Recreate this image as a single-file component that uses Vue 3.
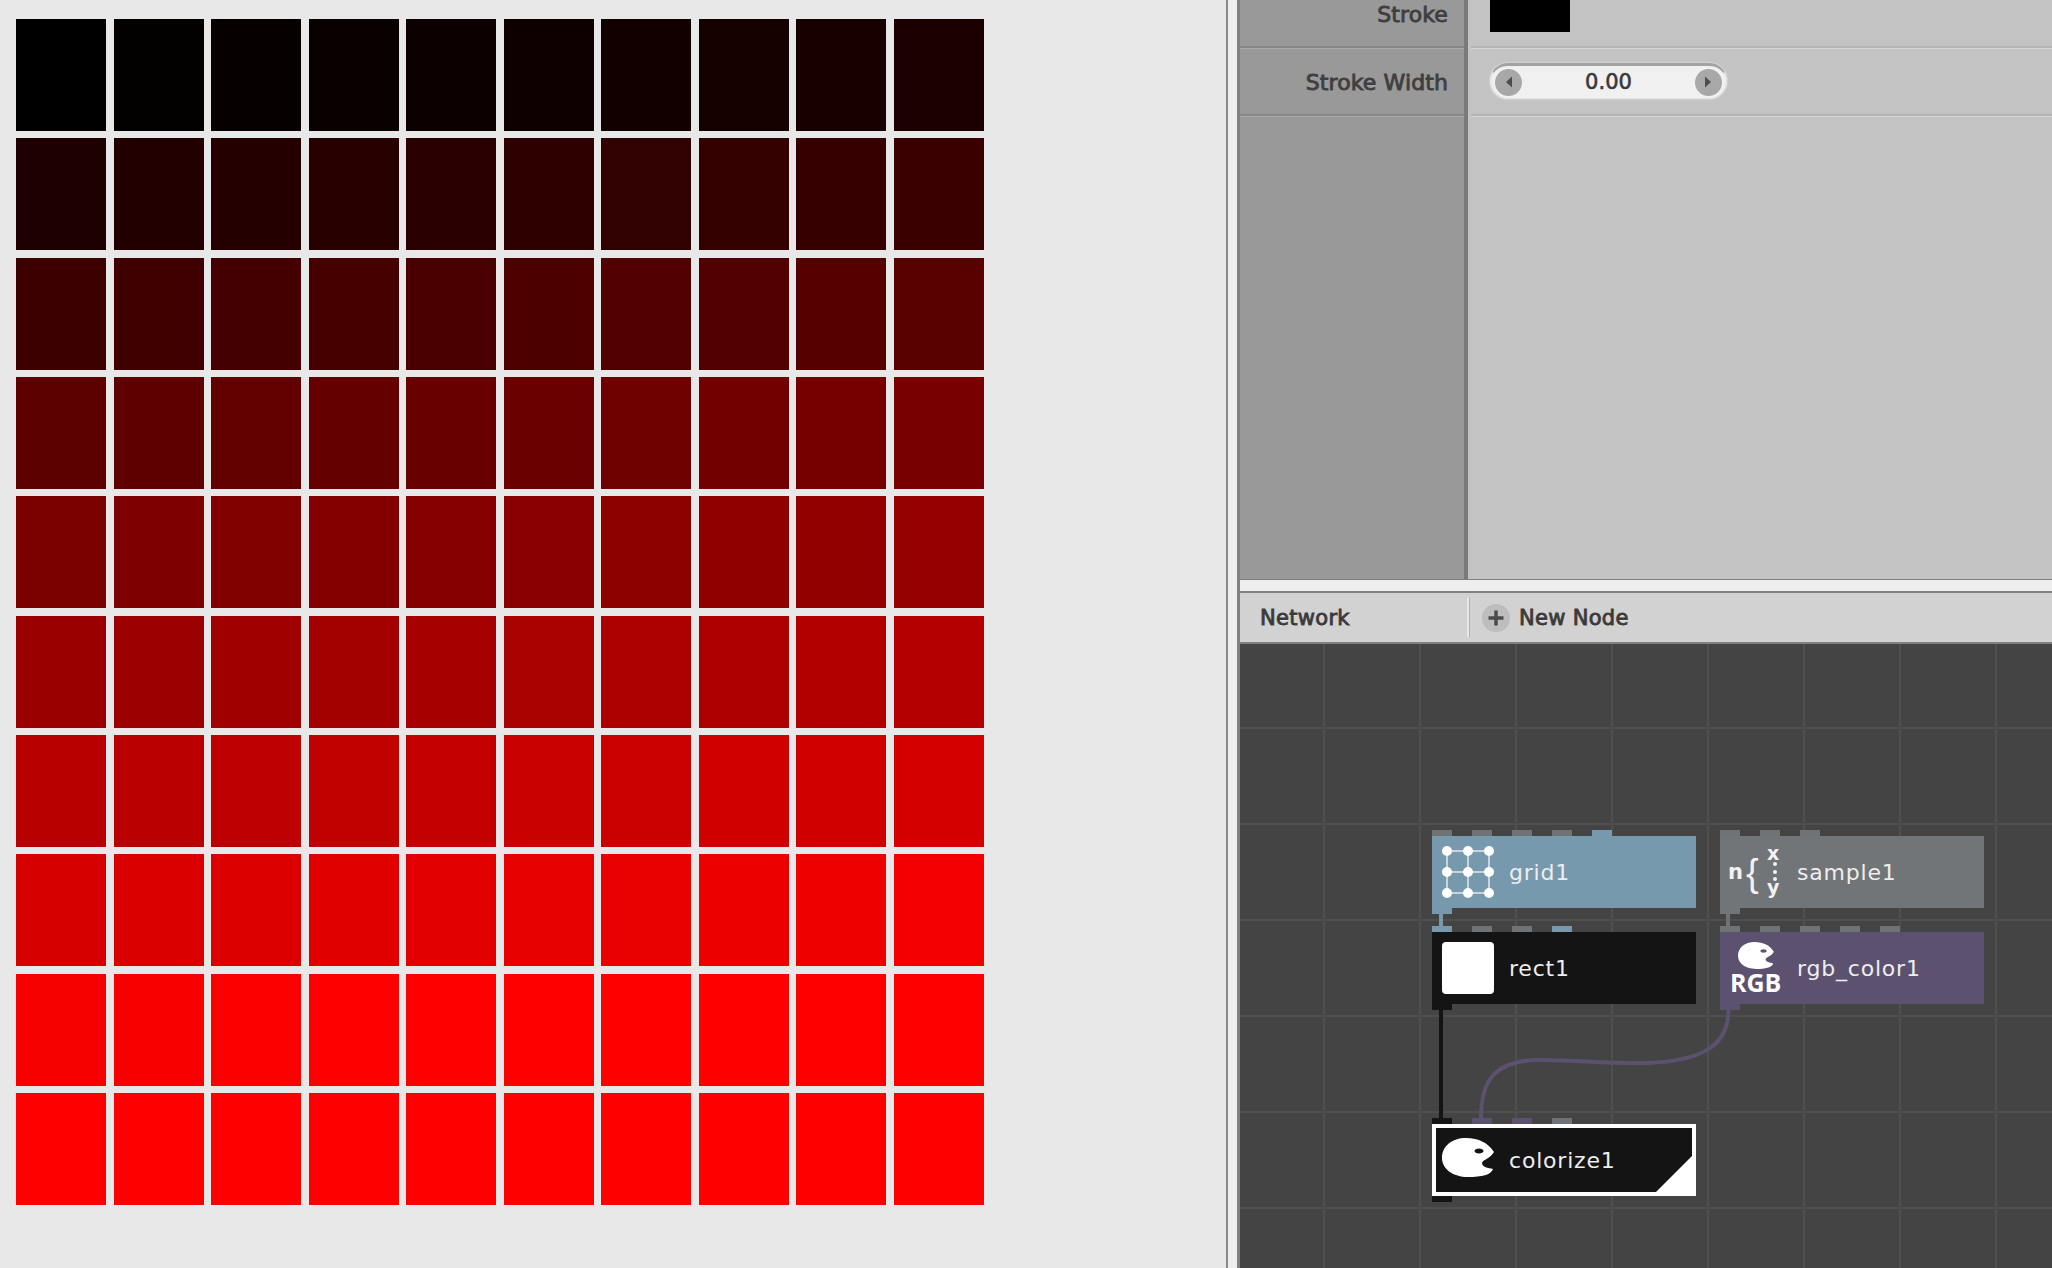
<script setup>
const cells = Array.from({ length: 100 }, (_, i) => Math.min(255, Math.round(i * 3.07)))

const GREY = '#6f7375'
const BLUE = '#7799ad'
const PURPLE = '#5c526f'
const BLACK = '#141414'

const nodes = [
  { name: 'grid1', icon: 'grid', x: 192, y: 192, color: BLUE, ports: [GREY, GREY, GREY, GREY, BLUE] },
  { name: 'rect1', icon: 'rect', x: 192, y: 288, color: BLACK, ports: [BLUE, GREY, GREY, BLUE] },
  { name: 'sample1', icon: 'sample', x: 480, y: 192, color: '#717577', ports: [GREY, GREY, GREY] },
  { name: 'rgb_color1', icon: 'rgb', x: 480, y: 288, color: PURPLE, ports: [GREY, GREY, GREY, GREY, GREY] },
  { name: 'colorize1', icon: 'palette', x: 192, y: 480, color: BLACK, ports: [BLACK, PURPLE, PURPLE, GREY], rendered: true },
]

const dots = []
for (const cx of [5, 26, 47]) for (const cy of [5, 26, 47]) dots.push({ cx, cy })

const blob = 'M52 14C46 5 37 0 24 0C10 0 0 8 0 20C0 31 11 39 26 39C40 39 49 37 51 31C46 30 40 29 40 25C40 22 48 21 52 14ZM37 10.5C34.5 10.5 32.5 11.6 32.5 13C32.5 14.4 34.5 15.5 37 15.5C39.5 15.5 41.5 14.4 41.5 13C41.5 11.6 39.5 10.5 37 10.5Z'
</script>

<template>
  <div class="app">
    <main class="viewer">
      <div class="swatches">
        <div v-for="(red, i) in cells" :key="i" class="swatch" :style="{ background: `rgb(${red},0,0)` }"></div>
      </div>
    </main>

    <div class="splitter"></div>

    <aside class="side">
      <section class="params">
        <div class="labels">
          <div class="label first">Stroke</div>
          <div class="label second">Stroke Width</div>
        </div>
        <div class="values">
          <div class="value first"><div class="colorbox"></div></div>
          <div class="value second">
            <div class="stepper">
              <span class="step">
                <svg width="8" height="14" viewBox="0 0 8 14"><path d="M7 1.500v11L1 7z" fill="#4c4c4c" /></svg>
              </span>
              <span class="step-value">0.00</span>
              <span class="step">
                <svg width="8" height="14" viewBox="0 0 8 14"><path d="M1 1.500v11L7 7z" fill="#4c4c4c" /></svg>
              </span>
            </div>
          </div>
        </div>
      </section>

      <div class="gutter"></div>

      <header class="net-head">
        <div class="net-title">Network</div>
        <div class="net-new">
          <span class="plus">
            <svg width="18" height="18" viewBox="0 0 18 18"><path d="M9 1.500v15M1.500 9h15" stroke="#4a4a4a" stroke-width="3.500" /></svg>
          </span>
          <span>New Node</span>
        </div>
      </header>

      <section class="canvas">
        <svg class="wires" width="812" height="624" viewBox="0 0 812 624">
          <path d="M201 270V282" stroke="#7799ad" stroke-width="4" fill="none" />
          <path d="M201 366V474" stroke="#141414" stroke-width="4" fill="none" />
          <path d="M488 270V282" stroke="#6f7375" stroke-width="4" fill="none" />
          <path d="M488.500 366C488.500 403 460 417 407 419C372 420 340 416 300 416C255 416 241 436 241 474" stroke="#5c526f" stroke-width="4" fill="none" />
        </svg>

        <div
          v-for="node in nodes"
          :key="node.name"
          class="node"
          :class="{ rendered: node.rendered }"
          :style="{ left: node.x + 'px', top: node.y + 'px', background: node.color }"
        >
          <span
            v-for="(port, i) in node.ports"
            :key="i"
            class="port"
            :style="{ left: i * 40 + 'px', background: port }"
          ></span>
          <span class="output" :style="{ background: node.color }"></span>

          <svg class="icon" width="52" height="52" viewBox="0 0 52 52">
            <g v-if="node.icon === 'grid'">
              <path d="M5 5H47V47H5ZM26 5V47M5 26H47" fill="none" stroke="#e4e9ec" stroke-width="1.500" />
              <circle v-for="d in dots" :key="d.cx + '-' + d.cy" :cx="d.cx" :cy="d.cy" r="5" fill="#fff" />
            </g>
            <rect v-else-if="node.icon === 'rect'" width="52" height="52" rx="4" fill="#fff" />
            <g v-else-if="node.icon === 'sample'" fill="#f2f2f2" font-family="'DejaVu Sans', sans-serif">
              <text x="-2" y="33" font-size="21" font-weight="700">n</text>
              <text x="16" y="40" font-size="38" font-family="'Liberation Sans', sans-serif" font-weight="400">{</text>
              <text x="37" y="14" font-size="19" font-weight="700">x</text>
              <circle cx="45" cy="18" r="2" />
              <circle cx="45" cy="26" r="2" />
              <circle cx="45" cy="33" r="2" />
              <text x="37" y="48" font-size="19" font-weight="700">y</text>
            </g>
            <g v-else-if="node.icon === 'rgb'">
              <path :d="blob" fill="#fff" fill-rule="evenodd" transform="translate(8 0) scale(0.69)" />
              <text x="0" y="50" font-size="25" font-weight="700" fill="#fff" font-family="'Open Sans', sans-serif">RGB</text>
            </g>
            <path v-else :d="blob" fill="#fff" fill-rule="evenodd" transform="translate(0 4)" />
          </svg>

          <span class="name">{{ node.name }}</span>
          <svg v-if="node.rendered" class="corner" width="36" height="36" viewBox="0 0 36 36"><path d="M36 0V36H0Z" fill="#fff" /></svg>
        </div>
      </section>
    </aside>
  </div>
</template>

<style>
html,
body {
  margin: 0;
  overflow: hidden;
}
</style>

<style scoped>
.app {
  display: flex;
  width: 2052px;
  height: 1268px;
  overflow: hidden;
  font-family: 'DejaVu Sans', sans-serif;
  background: #e8e8e8;
}

.viewer {
  width: 1226px;
  flex: none;
  padding: 19px 0 0 16px;
  box-sizing: border-box;
}

.swatches {
  display: grid;
  width: 968px;
  height: 1186px;
  grid-template-columns: repeat(10, 1fr);
  grid-template-rows: repeat(10, 1fr);
  column-gap: 7.4px;
  row-gap: 7.3px;
}

.splitter {
  width: 14px;
  flex: none;
  box-sizing: border-box;
  border-left: 2px solid #8a8a8a;
  border-right: 3px solid #808080;
  background: #eeeeee;
}

.side {
  display: flex;
  flex: 1;
  min-width: 0;
  flex-direction: column;
}

.params {
  display: flex;
  height: 580px;
  flex: none;
  border-bottom: 1px solid #7d7d7d;
  box-sizing: border-box;
}

.labels {
  width: 228px;
  flex: none;
  box-sizing: border-box;
  border-right: 4px solid #7a7a7a;
  background: #999999;
}

.label {
  display: flex;
  align-items: center;
  justify-content: flex-end;
  padding-right: 16px;
  box-sizing: border-box;
  border-bottom: 2px solid #888888;
  color: #3f3f3f;
  font-size: 22px;
  letter-spacing: 0.1px;
  -webkit-text-stroke: 0.9px #3f3f3f;
  text-shadow: 0 1px 0 #a8a8a8;
  box-shadow: 0 1px 0 #a9a9a9;
}

.first {
  height: 48px;
  padding-bottom: 18px;
}

.second {
  height: 68px;
  padding-top: 3px;
}

.values {
  flex: 1;
  padding-left: 3px;
  background: #c3c3c3;
}

.value {
  display: flex;
  padding-left: 19px;
  box-sizing: border-box;
  border-bottom: 2px solid #b4b4b4;
  box-shadow: 0 1px 0 #d6d6d6;
}

.value.first {
  align-items: flex-start;
}

.value.second {
  align-items: center;
  padding-top: 0;
}

.colorbox {
  width: 80px;
  height: 32px;
  background: #000;
}

.stepper {
  display: flex;
  width: 237px;
  height: 36px;
  align-items: center;
  justify-content: space-between;
  padding: 0 4px;
  box-sizing: border-box;
  border: 1px solid #e2e2e2;
  border-top: 3px solid #a2a2a2;
  border-radius: 18px;
  background: #f0f0f0;
  box-shadow: 0 0 2px #f6f6f6;
}

.step {
  display: flex;
  width: 27px;
  height: 27px;
  align-items: center;
  justify-content: center;
  border-radius: 50%;
  background: #a8a8a8;
}

.step-value {
  color: #3a3a3a;
  font-size: 21px;
  -webkit-text-stroke: 0.6px #3a3a3a;
}

.gutter {
  height: 11px;
  flex: none;
  background: #eeeeee;
}

.net-head {
  display: flex;
  height: 49px;
  flex: none;
  align-items: stretch;
  border-top: 2px solid #808080;
  border-bottom: 2px solid #808080;
  background: #d2d2d2;
  color: #3a3a3a;
  font-size: 21px;
  letter-spacing: 0.3px;
  -webkit-text-stroke: 0.9px #3a3a3a;
  text-shadow: 0 1px 0 #f4f4f4;
}

.net-title {
  display: flex;
  width: 227px;
  flex: none;
  align-items: center;
  padding-left: 20px;
  box-sizing: border-box;
}

.net-new {
  display: flex;
  flex: 1;
  margin: 5px 0;
  align-items: center;
  gap: 9px;
  padding-left: 13px;
  border-left: 2px solid #e8e8e8;
  box-shadow: inset 1px 0 0 #b0b0b0;
}

.plus {
  display: flex;
  width: 28px;
  height: 28px;
  align-items: center;
  justify-content: center;
  border-radius: 50%;
  background: #bdbdbd;
}

.canvas {
  position: relative;
  flex: 1;
  overflow: hidden;
  background-color: #444444;
  background-image:
    linear-gradient(#4f4f4f 2px, transparent 2px),
    linear-gradient(90deg, #4f4f4f 2px, transparent 2px);
  background-size: 96px 96px;
  background-position: 83px 83px;
}

.wires {
  position: absolute;
  top: 0;
  left: 0;
}

.node {
  position: absolute;
  display: flex;
  width: 264px;
  height: 72px;
  align-items: center;
  gap: 15px;
  padding-left: 10px;
  box-sizing: border-box;
}

.rendered {
  box-shadow: inset 0 0 0 4px #fff;
}

.port {
  position: absolute;
  top: -6px;
  width: 20px;
  height: 6px;
}

.output {
  position: absolute;
  bottom: -6px;
  left: 0;
  width: 20px;
  height: 6px;
}

.icon {
  flex: none;
  overflow: visible;
}

.name {
  color: #eeeeee;
  font-size: 22px;
  letter-spacing: 0.8px;
}

.corner {
  position: absolute;
  right: 4px;
  bottom: 4px;
}
</style>
